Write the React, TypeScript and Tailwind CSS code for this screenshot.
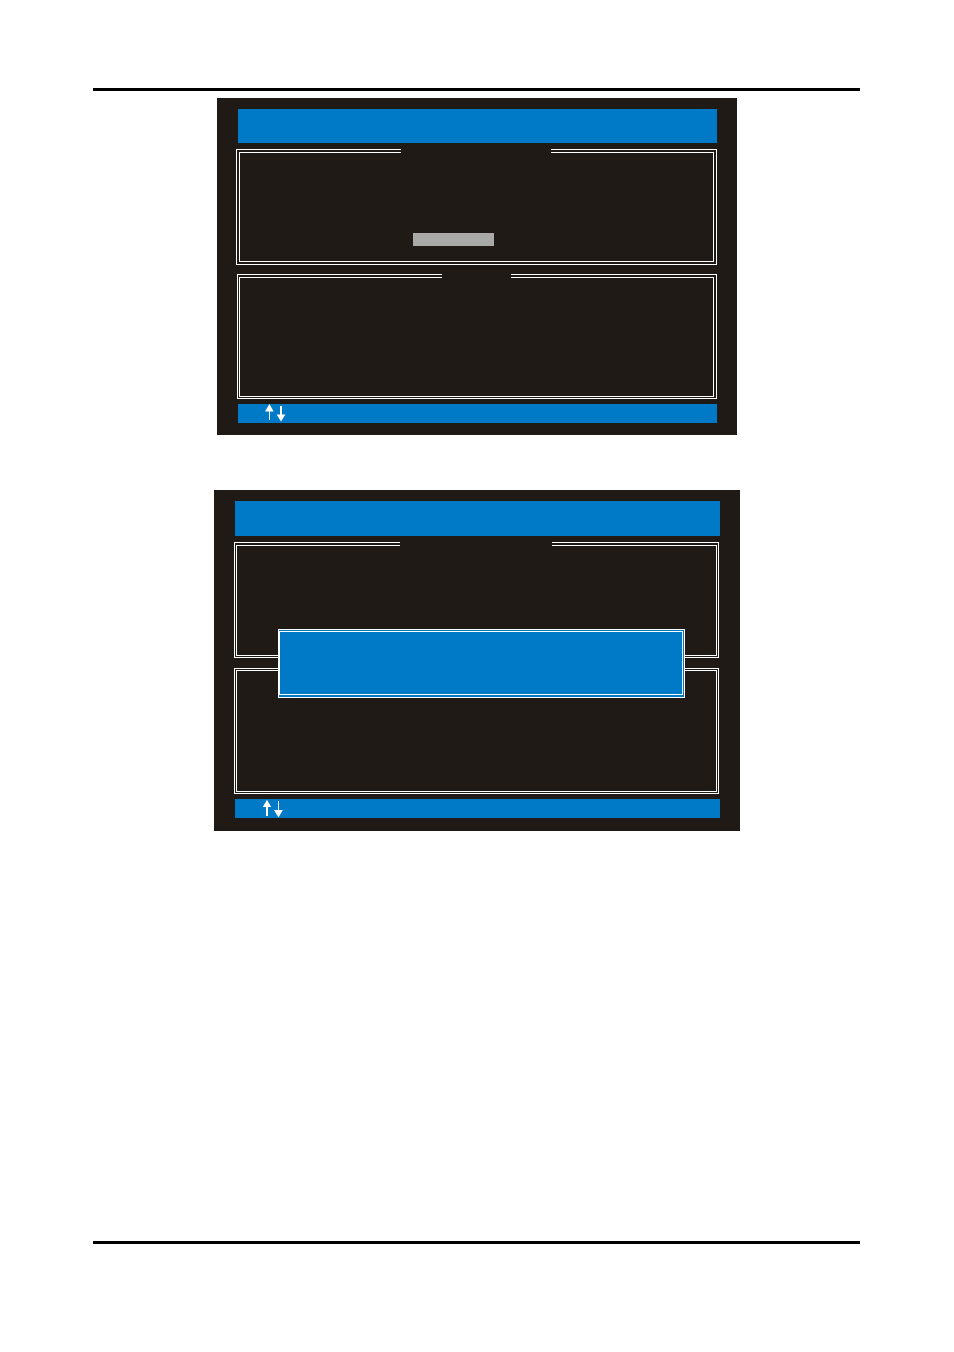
import { clsx } from "clsx";
import type { ReactNode } from "react";

function Frame({
  className,
  inset,
  gap,
  children,
}: {
  className: string;
  inset: string;
  gap?: string;
  children?: ReactNode;
}) {
  return (
    <section className={clsx("relative border border-white", inset, className)}>
      <div className="h-full border border-white">{children}</div>
      {gap && <div className={clsx("absolute -top-px h-1 bg-[#201a17]", gap)} />}
    </section>
  );
}

function Screen({ className, children }: { className: string; children: ReactNode }) {
  return (
    <div className={clsx("relative mx-auto flex w-full flex-col bg-[#201a17]", className)}>
      {children}
    </div>
  );
}

export default function App() {
  return (
    <div className="flex min-h-screen flex-col bg-white pt-[88px] pr-[94px] pb-[108px] pl-[93px]">
      <hr className="border-0 border-t-[3px] border-black" />

      <main className="-mr-px flex flex-col pt-[7px] pb-8">
        <Screen className="max-w-[520px] pt-[11px] pr-5 pb-3 pl-[19px]">
          <header className="ml-0.5 h-[34px] bg-[#007ac7]" />
          <Frame
            className="mt-1.5 h-[116px]"
            inset="p-0.5"
            gap="left-[164px] right-[165px]"
          >
            <div className="mt-20 ml-[173px] h-[13px] w-[81px] bg-[#a9aaa8]" />
          </Frame>
          <Frame
            className="mt-[9px] ml-px h-[125px]"
            inset="pt-0.5 pr-0.5 pb-px pl-px"
            gap="left-[204px] right-[205px]"
          />
          <footer className="mt-[5px] ml-0.5 flex h-[19px] bg-[#007ac7] pl-[26px]">
            <svg className="h-[19px] w-6" viewBox="264 404 24 19" fill="white" aria-hidden="true">
              <path d="M269.4 404 L273.7 411.5 H270 V420 H269 V411.5 H265 Z" />
              <path d="M280 406 H282 V414.5 H285.4 L281 421.6 L276.6 414.5 H280 Z" />
            </svg>
          </footer>
        </Screen>

        <Screen className="mt-[55px] max-w-[526px] pt-[11px] pr-5 pb-[13px] pl-5">
          <header className="ml-px h-[35px] bg-[#007ac7]" />
          <Frame
            className="mt-1.5 mr-px h-[116px]"
            inset="pt-0.5 pr-px pb-px pl-px"
            gap="left-[165px] right-[166px]"
          />
          <Frame className="mt-2.5 mr-px h-[126px]" inset="p-px" />
          <footer className="mt-[5px] ml-px flex h-[19px] bg-[#007ac7] pl-[27px]">
            <svg className="h-[19px] w-6" viewBox="262 799 24 19" fill="white" aria-hidden="true">
              <path d="M267 799.7 L271.2 807 H268 V816 H266 V807 H262.8 Z" />
              <path d="M278 801 H279 V810 H282.9 L278.5 817.4 L274 810 H278 Z" />
            </svg>
          </footer>

          <div
            role="dialog"
            className="absolute top-[139px] right-[55px] left-16 h-[69px] border border-white bg-[#007ac7] pt-px pr-px pb-0.5"
          >
            <div className="h-full border border-white" />
          </div>
        </Screen>
      </main>

      <hr className="mt-auto border-0 border-t-[3px] border-black" />
    </div>
  );
}
